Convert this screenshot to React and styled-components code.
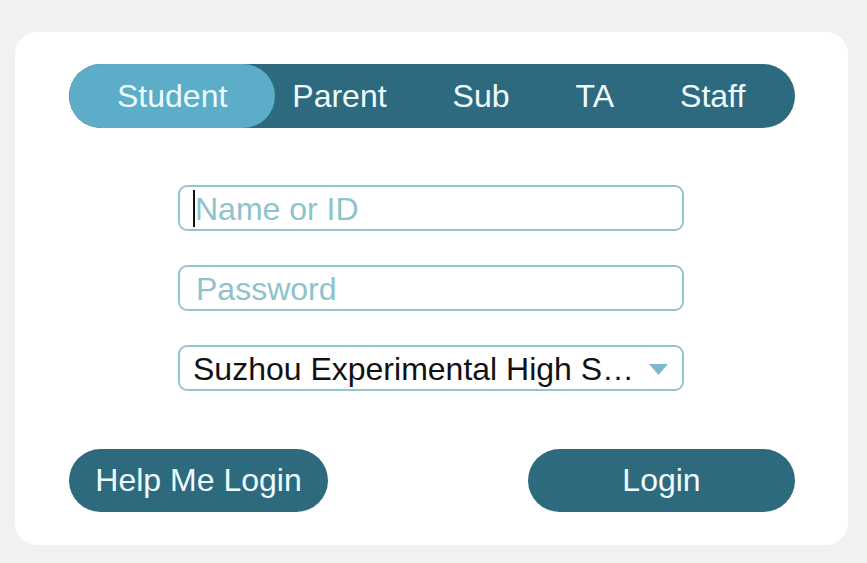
import React from "react";
import styled, { createGlobalStyle } from "styled-components";

const Global = createGlobalStyle`
  html, body { margin: 0; padding: 0; background: #f1f1f1; }
  body { font-family: "Liberation Sans", Arial, sans-serif; }
  * { box-sizing: border-box; }
`;

const Page = styled.div`
  width: 867px;
  height: 563px;
  padding: 32px 19px 18px 15px;
`;

const Card = styled.div`
  width: 833px;
  height: 513px;
  background: #ffffff;
  border-radius: 22px;
  padding: 32px 53px 33px 54px;
  display: flex;
  flex-direction: column;
  align-items: center;
`;

const TabBar = styled.div`
  width: 726px;
  height: 64px;
  border-radius: 32px;
  background: #2e6a7f;
  display: flex;
  align-items: stretch;
  overflow: hidden;
`;

const Tab = styled.div`
  display: flex;
  align-items: center;
  justify-content: center;
  font-size: 32px;
  color: #eefcff;
  white-space: nowrap;
  padding: 0 ${(p) => (p.$active ? 48 : 33)}px;
  margin-right: ${(p) => (p.$active ? -16 : 0)}px;
  border-radius: 32px;
  background: ${(p) => (p.$active ? "#5badc8" : "transparent")};
  position: relative;
  z-index: ${(p) => (p.$active ? 1 : 0)};
`;

const Form = styled.div`
  margin-top: 57px;
  margin-left: -2px;
  width: 506px;
  display: flex;
  flex-direction: column;
  gap: 34px;
`;

const Field = styled.div`
  height: 46px;
  border: 2px solid #93c5cc;
  border-radius: 9px;
  display: flex;
  align-items: center;
  padding: 2px 14px 0 ${(p) => p.$pl || 13}px;
  font-size: 32px;
  color: ${(p) => (p.$value ? "#111" : "#8ec3cc")};
  white-space: nowrap;
  overflow: hidden;
`;

const Caret = styled.span`
  width: 2px;
  height: 37px;
  background: #111;
  margin-top: -2px;
  flex: none;
`;

const FieldText = styled.span`
  flex: 1;
  overflow: hidden;
`;

const Arrow = styled.svg`
  flex: none;
  margin-left: 8px;
`;

const Actions = styled.div`
  margin-top: 58px;
  width: 726px;
  display: flex;
  justify-content: space-between;
`;

const Button = styled.button`
  height: 63px;
  width: ${(p) => p.$w}px;
  border: none;
  border-radius: 32px;
  background: #2e6a7e;
  color: #eefcff;
  font-family: "Liberation Sans", Arial, sans-serif;
  font-size: 32px;
  padding: 0;
  display: flex;
  align-items: center;
  justify-content: center;
`;

const tabs = ["Student", "Parent", "Sub", "TA", "Staff"];

export default function App() {
  return (
    <>
      <Global />
      <Page>
        <Card>
          <TabBar>
            {tabs.map((t, i) => (
              <Tab key={t} $active={i === 0}>
                {t}
              </Tab>
            ))}
          </TabBar>
          <Form>
            <Field>
              <Caret />
              <FieldText>Name or ID</FieldText>
            </Field>
            <Field $pl={16}>
              <FieldText>Password</FieldText>
            </Field>
            <Field $value $pl={13}>
              <FieldText>Suzhou Experimental High S…</FieldText>
              <Arrow width="19" height="11" viewBox="0 0 19 11">
                <path d="M0 0 H19 L9.5 11 Z" fill="#7db9cc" />
              </Arrow>
            </Field>
          </Form>
          <Actions>
            <Button $w={259}>Help Me Login</Button>
            <Button $w={267}>Login</Button>
          </Actions>
        </Card>
      </Page>
    </>
  );
}
